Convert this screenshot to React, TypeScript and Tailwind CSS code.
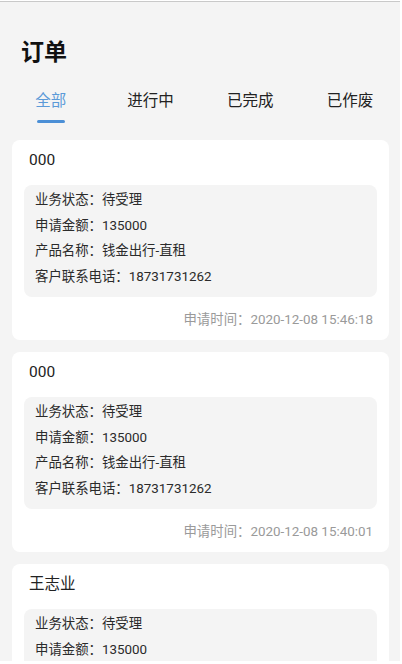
import React from "react";

const orders = [
  { name: "000", status: "待受理", amount: "135000", product: "钱金出行-直租", phone: "18731731262", time: "2020-12-08 15:46:18" },
  { name: "000", status: "待受理", amount: "135000", product: "钱金出行-直租", phone: "18731731262", time: "2020-12-08 15:40:01" },
  { name: "王志业", status: "待受理", amount: "135000", product: "钱金出行-直租", phone: "18731731262", time: "2020-12-08 15:30:00" },
];

const tabs = ["全部", "进行中", "已完成", "已作废"];

export default function App() {
  return (
    <div className="bg-white w-[402px] h-[664px] overflow-hidden" style={{ fontFamily: "Roboto, 'Noto Sans CJK SC', sans-serif" }}>
      <div className="w-[400px] h-[660px] bg-[#f4f4f4] overflow-hidden border-t-[1px] border-[#c9c9c9] mt-[1px] flex flex-col">
        <div className="h-[3px] bg-white" />
        <div className="pl-[21px] pt-[35px] h-[36px] box-content">
          <h1 className="text-[23px] leading-[32px] font-bold text-[#111]">订单</h1>
        </div>
        <div className="grid grid-cols-4 mt-[20px] pl-[1px]">
          {tabs.map((t, i) => (
            <div key={t} className="flex flex-col items-center">
              <span className={`text-[15.5px] leading-[24px] ${i === 0 ? "text-[#5b9ad8]" : "text-[#222]"}`}>{t}</span>
              <div className={`mt-[7px] h-[3px] w-[28px] rounded-full ${i === 0 ? "bg-[#4b8fd6]" : "bg-transparent"}`} />
            </div>
          ))}
        </div>
        <div className="flex flex-col gap-[12px] mt-[17px] pl-[12px] pr-[11px]">
          {orders.map((o, idx) => (
            <div key={idx} className="bg-white rounded-[8px] pt-[10px] pb-[10px] px-[12px] shrink-0">
              <div className="text-[15.5px] leading-[20px] text-[#222] pl-[5px]">{o.name}</div>
              <div className="mt-[15px] bg-[#f4f4f4] rounded-[8px] pt-[2px] pb-[8px] pl-[11px] text-[13.4px] text-[#2b2b2b]">
                <div className="leading-[25.5px]">业务状态：{o.status}</div>
                <div className="leading-[25.5px]">申请金额：{o.amount}</div>
                <div className="leading-[25.5px]">产品名称：{o.product}</div>
                <div className="leading-[25.5px]">客户联系电话：{o.phone}</div>
              </div>
              <div className="mt-[13px] text-right text-[13.4px] leading-[20px] text-[#9a9a9a] pr-[4px]">申请时间：{o.time}</div>
            </div>
          ))}
        </div>
      </div>
    </div>
  );
}
